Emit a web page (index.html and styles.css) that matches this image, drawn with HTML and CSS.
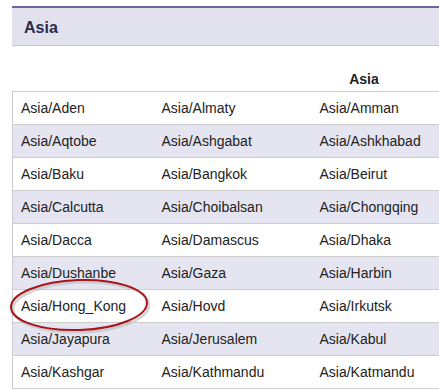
FILE: index.html
```html
<!DOCTYPE html>
<html lang="en">
<head>
  <meta charset="UTF-8">
  <title>Asia</title>
  <link rel="stylesheet" href="styles.css">
</head>
<body>
  <div class="page">
    <h2 class="section-title">Asia</h2>

    <table class="zones">
      <caption>Asia</caption>
      <colgroup>
        <col class="c1"><col class="c2"><col class="c3">
      </colgroup>
      <tbody>
        <tr><td>Asia/Aden</td><td>Asia/Almaty</td><td>Asia/Amman</td></tr>
        <tr><td>Asia/Aqtobe</td><td>Asia/Ashgabat</td><td>Asia/Ashkhabad</td></tr>
        <tr><td>Asia/Baku</td><td>Asia/Bangkok</td><td>Asia/Beirut</td></tr>
        <tr><td>Asia/Calcutta</td><td>Asia/Choibalsan</td><td>Asia/Chongqing</td></tr>
        <tr><td>Asia/Dacca</td><td>Asia/Damascus</td><td>Asia/Dhaka</td></tr>
        <tr><td>Asia/Dushanbe</td><td>Asia/Gaza</td><td>Asia/Harbin</td></tr>
        <tr><td>Asia/Hong_Kong</td><td>Asia/Hovd</td><td>Asia/Irkutsk</td></tr>
        <tr><td>Asia/Jayapura</td><td>Asia/Jerusalem</td><td>Asia/Kabul</td></tr>
        <tr><td>Asia/Kashgar</td><td>Asia/Kathmandu</td><td>Asia/Katmandu</td></tr>
      </tbody>
    </table>

    <!-- hand-drawn marker round Hong Kong -->
    <svg class="marker" width="170" height="70" viewBox="0 0 170 70">
      <ellipse cx="81" cy="38" rx="68" ry="25" fill="none" stroke="#bbb" stroke-width="3" opacity="0.6" transform="rotate(-2 81 38)"/>
      <ellipse cx="79" cy="36" rx="68" ry="25" fill="none" stroke="#a8141c" stroke-width="2" transform="rotate(-2 79 36)"/>
    </svg>
  </div>
</body>
</html>
```

FILE: styles.css
```css
*{
  margin: 0;
  padding: 0;
}

body{
  font-family: "Liberation Sans", Arial, sans-serif;
  font-size: 14px;
  color: #222;
  overflow: hidden;
}

.page{
  position: relative;
  padding: 6px 0 0 12px;
}

.section-title{
  height: 37px;
  line-height: 40px;
  padding-left: 12px;
  border-top: 2px solid #68689c;
  border-bottom: 1px solid #c4c4d4;
  background-color: #e2e2ef;
  font-size: 16px;
  font-weight: bold;
  color: #2c2c46;
}

.zones{
  width: 704px;
  border-collapse: collapse;
  border-left: 1px solid #ccc;
  border-top: 1px solid #ccc;
  table-layout: fixed;
}

.zones caption{
  height: 45px;
  line-height: 66px;
  font-weight: bold;
  color: #222;
}

.zones col.c1{ width: 141px; }
.zones col.c2{ width: 158px; }

.zones td{
  height: 32px;
  padding: 0 8px;
  border-bottom: 1px solid #ccc;
  white-space: nowrap;
}

.zones tr:nth-child(even) td{
  background-color: #e5e5f1;
}

.marker{
  position: absolute;
  left: 0;
  top: 269px;
}
```
